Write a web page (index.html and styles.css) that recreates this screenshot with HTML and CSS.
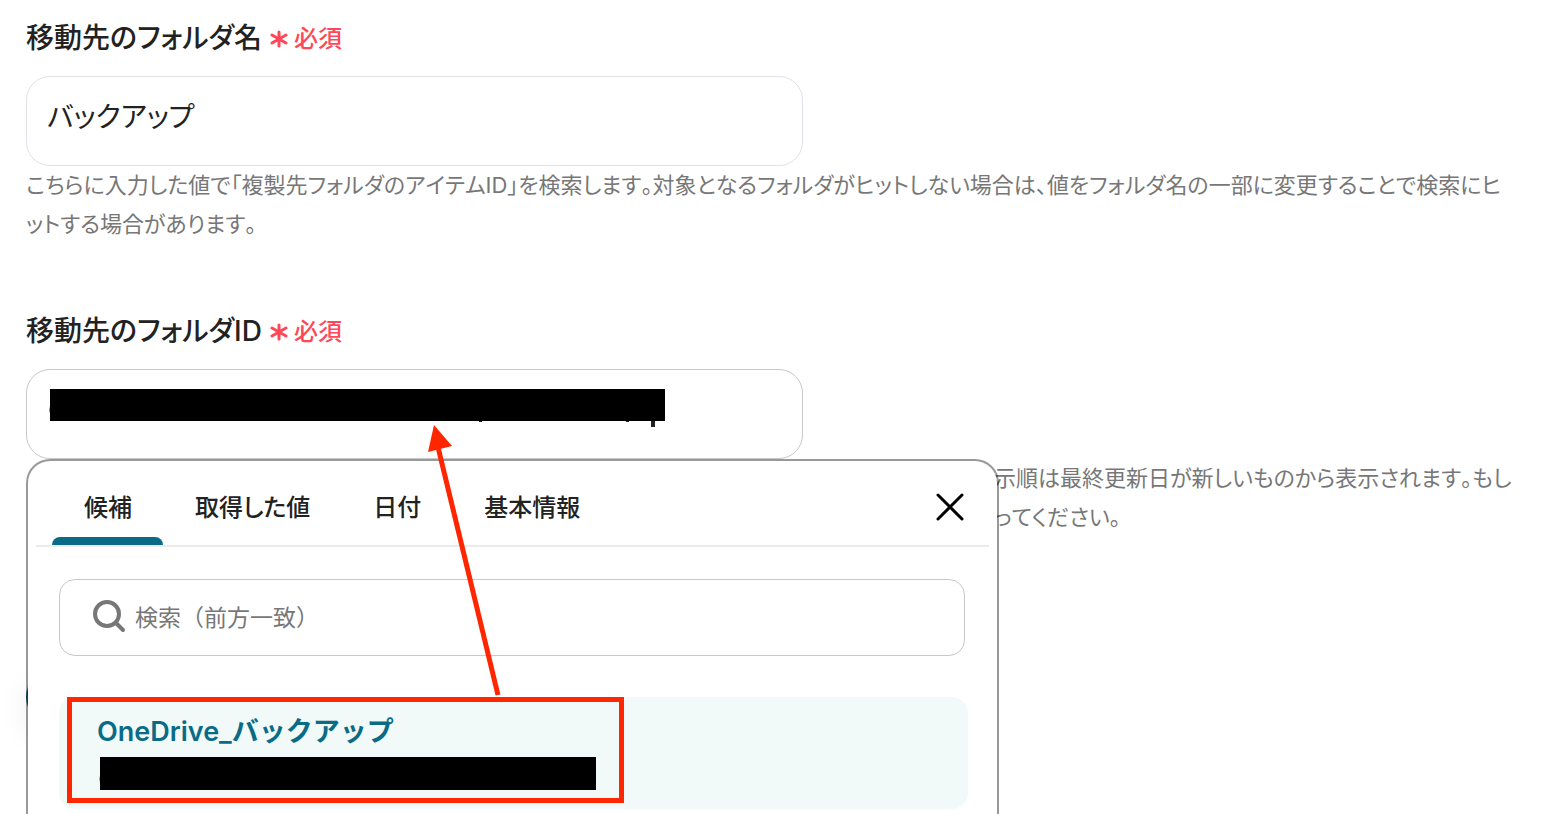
FILE: index.html
```html
<!DOCTYPE html>
<html lang="ja">
<head>
<meta charset="utf-8">
<meta name="viewport" content="width=device-width, initial-scale=1">
<title>移動先フォルダの設定</title>
<link rel="stylesheet" href="styles.css">
</head>
<body>
<main class="form">
  <section class="field">
    <div class="field-head">
      <label class="field-label" for="folder-name">移動先のフォルダ名</label>
      <span class="required"><svg class="asterisk" viewBox="0 0 18 20" aria-hidden="true"><path d="M9 4v14M2 7l14 8M16 7l-14 8"/></svg>必須</span>
    </div>
    <textarea class="text-box" id="folder-name">バックアップ</textarea>
    <p class="help">こちらに入力した値で「複製先フォルダのアイテムID」を検索します。対象となるフォルダがヒットしない場合は、値をフォルダ名の一部に変更することで検索にヒットする場合があります。</p>
  </section>

  <section class="field">
    <div class="field-head">
      <label class="field-label" for="folder-id">移動先のフォルダID</label>
      <span class="required"><svg class="asterisk" viewBox="0 0 18 20" aria-hidden="true"><path d="M9 4v14M2 7l14 8M16 7l-14 8"/></svg>必須</span>
    </div>
    <div class="picker">
      <textarea class="text-box text-box-active" id="folder-id"></textarea>
      <svg class="masked-value" viewBox="0 0 618 40" aria-hidden="true">
        <path d="M2 0h615v32H2z"/><path d="M3 15Q0 21 3 27z"/>
        <path d="M603 32h4v6h-4zM431 32h3v1h-3zM578 32h3v1h-3z" fill="#222"/>
      </svg>
      <div class="popover">
        <div class="popover-head">
          <div class="tabs" role="tablist">
            <button class="tab tab-selected" role="tab" aria-selected="true">候補</button>
            <button class="tab" role="tab">取得した値</button>
            <button class="tab" role="tab">日付</button>
            <button class="tab" role="tab">基本情報</button>
          </div>
          <button class="close" aria-label="閉じる"><svg viewBox="0 0 30 30"><path d="M3 3l24 24M27 3L3 27"/></svg></button>
        </div>
        <label class="search">
          <svg class="search-icon" viewBox="0 0 32 32" aria-hidden="true"><circle cx="14" cy="12" r="12"/><path d="M23 21l7 7"/></svg>
          <input class="search-input" type="text" placeholder="検索（前方一致）" aria-label="検索">
        </label>
        <button class="option">
          <span class="option-name">OneDrive_バックアップ</span>
          <svg class="option-mask" viewBox="0 0 499 33" aria-hidden="true"><path d="M4 17Q1 22 4 28z" fill="#0a6b86"/><path d="M3 0h496v33H3z"/></svg>
          <span class="highlight"></span>
        </button>
        <svg class="arrow" viewBox="0 0 80 280" aria-hidden="true"><path class="arrow-line" d="M74 270L13 18"/><path class="arrow-tip" d="M10 0L28 21L4 27z"/></svg>
      </div>
    </div>
    <p class="help help-behind">表示順は最終更新日が新しいものから表示されます。もし<br>使ってください。</p>
  </section>
  <button class="submit" aria-label="次へ"></button>
</main>
</body>
</html>
```
FILE: styles.css
```css
* {
  box-sizing: border-box;
}

body {
  margin: 0;
  background: #fff;
  color: #222;
  font-family: Inter, "Noto Sans CJK JP", sans-serif;
  font-feature-settings: "palt";
}

button,
input,
textarea {
  font: inherit;
  font-feature-settings: inherit;
  color: inherit;
}

button {
  border: 0;
  padding: 0;
  background: none;
}

.form {
  min-height: 100vh;
  overflow: hidden;
  padding: 16px 26px 0;
}

.field {
  margin-bottom: 65px;
}

.field-head {
  display: flex;
  align-items: center;
  gap: 8px;
  height: 40px;
  margin-bottom: 20px;
}

.field-label {
  font-size: 28px;
  font-weight: 500;
}

.required {
  display: flex;
  align-items: center;
  gap: 6px;
  color: #ff4757;
  font-size: 24px;
  font-weight: 500;
}

.asterisk {
  width: 18px;
  height: 20px;
  margin-top: 4px;
  fill: none;
  stroke: currentColor;
  stroke-width: 3;
  stroke-linecap: round;
}

.text-box {
  display: block;
  width: 777px;
  max-width: 100%;
  height: 90px;
  padding: 20px;
  border: 1px solid #dfe2e8;
  border-radius: 24px;
  outline: 0;
  resize: none;
  overflow: hidden;
  background: #fff;
  font-size: 28px;
  line-height: 40px;
}

.text-box-active {
  border-color: #c8c8c8;
}

.help {
  margin: 0;
  padding-right: 26px;
  color: #777;
  font-size: 22px;
  line-height: 39px;
  font-kerning: none;
}

.help-behind {
  padding-left: 946px;
  white-space: nowrap;
}

.picker {
  position: relative;
}

.masked-value {
  position: absolute;
  top: 20px;
  left: 22px;
  width: 618px;
  height: 40px;
}

.popover {
  position: absolute;
  z-index: 2;
  top: 100%;
  left: 0;
  width: 973px;
  height: 360px;
  border: 2px solid rgba(0, 0, 0, 0.4);
  border-bottom: 0;
  border-radius: 24px 24px 0 0;
  background: #fff padding-box;
}

.popover-head {
  display: flex;
  align-items: center;
  justify-content: space-between;
  height: 86px;
  margin: 0 8px;
  padding: 0 24px 0 16px;
  border-bottom: 2px solid #ebebeb;
}

.tabs {
  display: flex;
  align-self: stretch;
}

.tab {
  padding: 12px 31px 0 32px;
  border-bottom: 8px solid transparent;
  font-size: 24px;
  font-weight: 500;
}

.tab-selected {
  position: relative;
}

.tab-selected::after {
  content: "";
  position: absolute;
  right: 0;
  bottom: -8px;
  left: 0;
  height: 8px;
  border-radius: 8px 8px 0 0;
  background: #0a6b86;
}

.close {
  width: 30px;
  height: 30px;
  margin-top: 8px;
}

.close svg {
  display: block;
  fill: none;
  stroke: #000;
  stroke-width: 3;
  stroke-linecap: round;
}

.search {
  display: flex;
  align-items: center;
  gap: 10px;
  height: 77px;
  margin: 32px 32px 41px 31px;
  padding: 0 32px 0 33px;
  border: 1px solid #c8c8c8;
  border-radius: 16px;
}

.search-icon {
  flex: none;
  width: 32px;
  height: 32px;
  overflow: visible;
  fill: none;
  stroke: #777;
  stroke-width: 4;
  stroke-linecap: round;
}

.search-input {
  flex: 1;
  min-width: 0;
  padding: 0;
  border: 0;
  outline: 0;
  background: none;
  font-size: 23px;
  font-feature-settings: normal;
}

.search-input::placeholder {
  color: #777;
}

.option {
  display: flex;
  flex-direction: column;
  align-items: flex-start;
  position: relative;
  width: 909px;
  height: 112px;
  margin-left: 31px;
  padding: 14px 38px;
  border-radius: 16px;
  background: #f2faf9;
}

.option-name {
  height: 46px;
  color: #0a6b86;
  font-size: 27px;
  font-weight: 600;
  font-feature-settings: normal;
  line-height: 42px;
}

.option-mask {
  width: 499px;
  height: 33px;
}

.highlight {
  position: absolute;
  top: 0;
  left: 8px;
  width: 557px;
  height: 106px;
  border: 5px solid #ff2600;
}

.arrow {
  position: absolute;
  top: -36px;
  left: 396px;
  width: 80px;
  height: 280px;
}

.arrow-line {
  fill: none;
  stroke: #ff2600;
  stroke-width: 5;
}

.arrow-tip {
  fill: #ff2600;
}

.submit {
  display: block;
  width: 160px;
  height: 56px;
  margin-top: 132px;
  border-radius: 28px;
  background: #0a6b86;
  box-shadow: 0 12px 32px rgba(0, 0, 0, 0.08);
}
```
